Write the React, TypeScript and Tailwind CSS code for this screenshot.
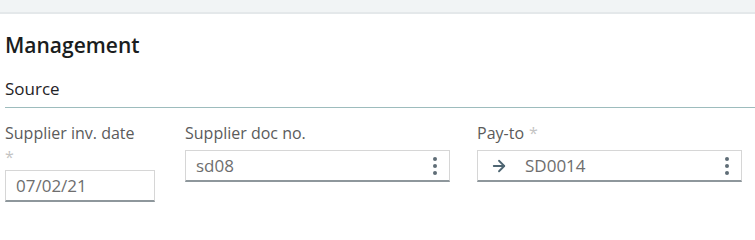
import { ArrowRight } from "lucide-react";

function Dots() {
  return (
    <div className="flex flex-col items-center gap-[3px] pl-[10px] pr-[12px]">
      <span className="h-[4px] w-[4px] rounded-full bg-[#5f6d77]" />
      <span className="h-[4px] w-[4px] rounded-full bg-[#5f6d77]" />
      <span className="h-[4px] w-[4px] rounded-full bg-[#5f6d77]" />
    </div>
  );
}

function Star() {
  return <span className="text-[16px] text-[#c4c4c4]">*</span>;
}

export default function App() {
  return (
    <div className="h-[215px] w-[755px] overflow-hidden bg-white font-['Open_Sans',sans-serif]">
      {/* Top strip */}
      <div className="h-[14px] border-b-2 border-[#e4e8ea] bg-[#f1f4f5]" />

      <div className="pl-[5px]">
        <h2 className="mt-[17px] text-[21px] font-semibold leading-[28px] text-[#1a1d20]">
          Management
        </h2>

        <div className="mt-[19px] border-b border-[#9dbcbd] pb-[7px] text-[17px] leading-[22px] text-[#1f2326]">
          Source
        </div>

        {/* Fields */}
        <div className="mt-[15px] flex items-start">
          <div className="w-[152px] pr-[2px]">
            <div className="text-[16px] leading-[20px] text-[#5b5b5b]">Supplier inv. date</div>
            <div className="mt-[5px] leading-[18px]">
              <Star />
            </div>
            <div className="mt-[4px] flex h-[32px] items-center border border-b-2 border-[#d6d6d6] border-b-[#8e979c] px-[10px] text-[17px] text-[#6e6e6e]">
              07/02/21
            </div>
          </div>

          <div className="ml-[28px] w-[265px]">
            <div className="text-[16px] leading-[20px] text-[#5b5b5b]">Supplier doc no.</div>
            <div className="mt-[7px] flex h-[32px] items-center justify-between border border-b-2 border-[#d6d6d6] border-b-[#8e979c] pl-[10px] text-[17px] text-[#6e6e6e]">
              <span>sd08</span>
              <Dots />
            </div>
          </div>

          <div className="ml-[27px] w-[265px]">
            <div className="flex items-center gap-[5px] text-[16px] leading-[20px] text-[#5b5b5b]">
              <span>Pay-to</span>
              <Star />
            </div>
            <div className="mt-[7px] flex h-[32px] items-center border border-b-2 border-[#d6d6d6] border-b-[#8e979c] pl-[12px] text-[17px] text-[#6e6e6e]">
              <ArrowRight className="h-[18px] w-[18px] text-[#4e6572]" strokeWidth={2.4} />
              <span className="ml-[17px] flex-1">SD0014</span>
              <Dots />
            </div>
          </div>
        </div>
      </div>
    </div>
  );
}
